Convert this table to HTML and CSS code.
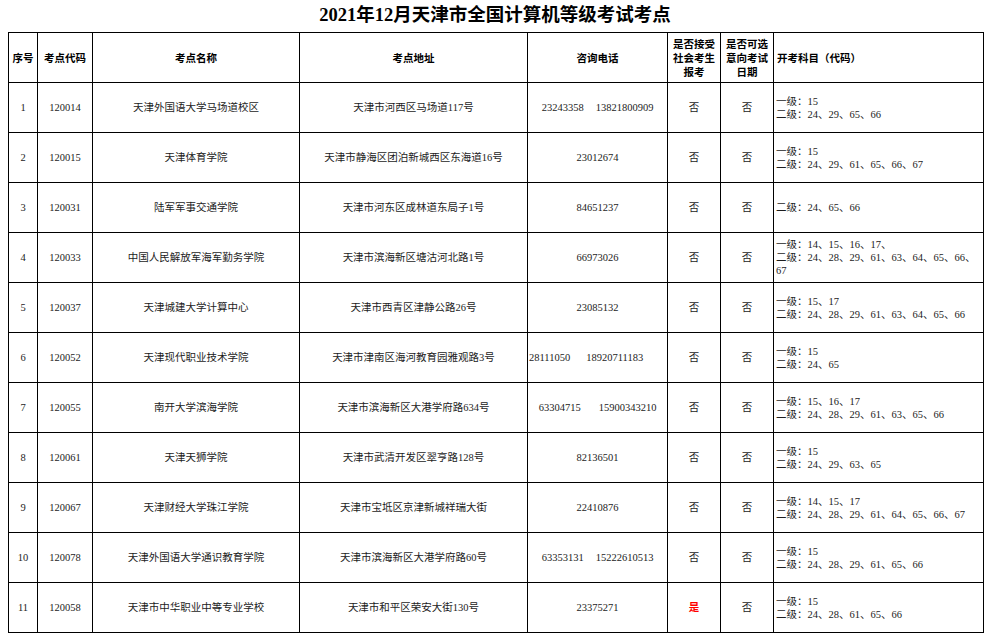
FILE: index.html
```html
<!DOCTYPE html>
<html lang="zh">
<head>
<meta charset="utf-8">
<title>2021年12月天津市全国计算机等级考试考点</title>
<link rel="stylesheet" href="styles.css">
</head>
<body>
<h1 class="title">2021年12月天津市全国计算机等级考试考点</h1>
<table class="sheet">
  <colgroup>
    <col class="c-no"><col class="c-code"><col class="c-name"><col class="c-addr"><col class="c-tel"><col class="c-soc"><col class="c-date"><col class="c-subj">
  </colgroup>
  <thead>
    <tr>
      <th>序号</th>
      <th>考点代码</th>
      <th>考点名称</th>
      <th>考点地址</th>
      <th>咨询电话</th>
      <th>是否接受<br>社会考生<br>报考</th>
      <th>是否可选<br>意向考试<br>日期</th>
      <th class="left">开考科目（代码）</th>
    </tr>
  </thead>
  <tbody>
    <tr>
      <td>1</td><td>120014</td><td>天津外国语大学马场道校区</td><td>天津市河西区马场道117号</td>
      <td>23243358<span class="gap g12">13821800909</span></td><td>否</td><td>否</td>
      <td class="subj">一级：15<br>二级：24、29、65、66</td>
    </tr>
    <tr>
      <td>2</td><td>120015</td><td>天津体育学院</td><td>天津市静海区团泊新城西区东海道16号</td>
      <td>23012674</td><td>否</td><td>否</td>
      <td class="subj">一级：15<br>二级：24、29、61、65、66、67</td>
    </tr>
    <tr>
      <td>3</td><td>120031</td><td>陆军军事交通学院</td><td>天津市河东区成林道东局子1号</td>
      <td>84651237</td><td>否</td><td>否</td>
      <td class="subj">二级：24、65、66</td>
    </tr>
    <tr>
      <td>4</td><td>120033</td><td>中国人民解放军海军勤务学院</td><td>天津市滨海新区塘沽河北路1号</td>
      <td>66973026</td><td>否</td><td>否</td>
      <td class="subj">一级：14、15、16、17、<br>二级：24、28、29、61、63、64、65、66、<br>67</td>
    </tr>
    <tr>
      <td>5</td><td>120037</td><td>天津城建大学计算中心</td><td>天津市西青区津静公路26号</td>
      <td>23085132</td><td>否</td><td>否</td>
      <td class="subj">一级：15、17<br>二级：24、28、29、61、63、64、65、66</td>
    </tr>
    <tr>
      <td>6</td><td>120052</td><td>天津现代职业技术学院</td><td>天津市津南区海河教育园雅观路3号</td>
      <td class="left">28111050<span class="gap g16">18920711183</span></td><td>否</td><td>否</td>
      <td class="subj">一级：15<br>二级：24、65</td>
    </tr>
    <tr>
      <td>7</td><td>120055</td><td>南开大学滨海学院</td><td>天津市滨海新区大港学府路634号</td>
      <td>63304715<span class="gap g18">15900343210</span></td><td>否</td><td>否</td>
      <td class="subj">一级：15、16、17<br>二级：24、28、29、61、63、65、66</td>
    </tr>
    <tr>
      <td>8</td><td>120061</td><td>天津天狮学院</td><td>天津市武清开发区翠亨路128号</td>
      <td>82136501</td><td>否</td><td>否</td>
      <td class="subj">一级：15<br>二级：24、29、63、65</td>
    </tr>
    <tr>
      <td>9</td><td>120067</td><td>天津财经大学珠江学院</td><td>天津市宝坻区京津新城祥瑞大街</td>
      <td>22410876</td><td>否</td><td>否</td>
      <td class="subj">一级：14、15、17<br>二级：24、28、29、61、64、65、66、67</td>
    </tr>
    <tr>
      <td>10</td><td>120078</td><td>天津外国语大学通识教育学院</td><td>天津市滨海新区大港学府路60号</td>
      <td>63353131<span class="gap g12">15222610513</span></td><td>否</td><td>否</td>
      <td class="subj">一级：15<br>二级：24、28、29、61、65、66</td>
    </tr>
    <tr>
      <td>11</td><td>120058</td><td>天津市中华职业中等专业学校</td><td>天津市和平区荣安大街130号</td>
      <td>23375271</td><td class="yes">是</td><td>否</td>
      <td class="subj">一级：15<br>二级：24、28、61、65、66</td>
    </tr>
  </tbody>
</table>
</body>
</html>
```

FILE: styles.css
```css
html, body {
  margin: 0;
  padding: 0;
  background: #ffffff;
}

body {
  padding: 0 8px;
  font-family: "Liberation Serif", "Noto Sans CJK SC", serif;
  color: #1c1c1c;
}

.title {
  margin: 0;
  height: 32px;
  line-height: 30px;
  font-size: 18.5px;
  font-weight: bold;
  text-align: center;
  color: #000;
  font-family: "Liberation Serif", "Noto Sans CJK SC", serif;
}

.sheet {
  width: 976px;
  table-layout: fixed;
  border-collapse: collapse;
  font-size: 10.5px;
}

.c-no { width: 29px; }
.c-code { width: 55px; }
.c-name { width: 207px; }
.c-addr { width: 228px; }
.c-tel { width: 140px; }
.c-soc { width: 53px; }
.c-date { width: 53px; }
.c-subj { width: 210px; }

.sheet th,
.sheet td {
  border: 1px solid #000;
  height: 49px;
  padding: 0;
  text-align: center;
  vertical-align: middle;
  white-space: nowrap;
  overflow: hidden;
}

.sheet th {
  font-family: "Noto Sans CJK SC", sans-serif;
  font-weight: bold;
  color: #000;
  line-height: 14px;
  font-size: 10.5px;
}

.sheet td {
  line-height: 13px;
}

.sheet th.left {
  text-align: left;
  padding-left: 3px;
}

.sheet td.left {
  text-align: left;
  padding-left: 1px;
}

.sheet td.subj {
  text-align: left;
  padding-left: 2px;
}

.gap { display: inline-block; }
.g12 { margin-left: 12px; }
.g16 { margin-left: 16px; }
.g18 { margin-left: 18px; }

.sheet td.yes {
  color: #ff0000;
  font-weight: bold;
}
```
